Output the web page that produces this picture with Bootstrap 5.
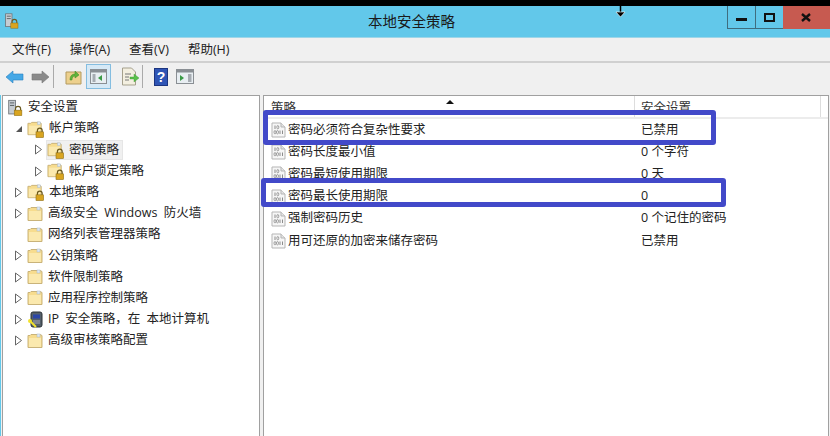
<!DOCTYPE html>
<html lang="zh"><head><meta charset="utf-8"><title>本地安全策略</title>
<link href="https://cdn.jsdelivr.net/npm/bootstrap@5.3.0/dist/css/bootstrap.min.css" rel="stylesheet">
<style>
html,body{height:436px;overflow:hidden;background:#fff}
body{font-family:"Open Sans","Noto Sans CJK SC",sans-serif;font-size:12.5px;color:#222;position:relative}
.topstrip{height:6px;background:#000}
.titlebar{height:32px;background:#62c8ea;border-bottom:1px solid #9fd6e8;position:relative}
.title-text{font-size:14.5px;color:#1a1a1a;padding-right:7px}
.title-ico{position:absolute;left:4px;top:6px}
.win-btns{position:absolute;right:0;top:0;height:23px}
.wb{width:29px;border:1px solid #3f6d7e;border-top:0;margin-left:-1px}
.wb-close{width:47px;background:#c75a50;border-left:0;border-color:#c75a50}
.menubar{height:25px;background:#f0f0f0;border-bottom:2px solid #d0d0d0;padding-left:12px;padding-top:2px;gap:19px}
.toolbar{height:32px;background:#f0f0f0;padding-left:6px;padding-bottom:5px}
.tb-sep{width:1px;height:23px;background:#aaa}
.tb-on{width:25px;height:25px;background:#d6e9f6;border:1px solid #84bde0;margin-left:4px}
.gap-fwd{margin-left:7px}.gap-sep1{margin-left:4px}.gap-up{margin-left:11px}.gap-doc{margin-left:10px}.gap-sep2{margin-left:2px}.gap-help{margin-left:11px}.gap-panel{margin-left:8px}
.panes{height:341px;background:#f0f0f0;gap:3px;padding-left:1px;border-left:1px solid #62c8ea}
.tree{width:258px;background:#fff;border:1px solid #a0a0a0;border-bottom:0;padding-top:1px;word-spacing:3px}
.tree-row{height:21.2px;white-space:nowrap}
.ind0{padding-left:4px}.ind1{padding-left:11px}.ind2{padding-left:31px}
.tw{width:9px;flex:none;margin-right:4px}
.tico{flex:none;margin-right:4px}
.fico{flex:none;margin-right:5px}
.sel-box{background:#f0f0f0;border:1px solid #e6e6e6;height:20px;padding-right:3px;margin-left:-1px}
.listpane{flex:1;background:#fff;border:1px solid #a0a0a0;border-bottom:0;margin-right:1px}
.lhead{height:23px;border-bottom:2px solid #ececec;color:#333;position:relative}
.lh1{width:371px;padding-left:7px;border-right:1px solid #ddd;padding-top:3px}
.lh2{width:186px;padding-left:6px;border-right:1px solid #ddd;padding-top:3px}
.sort{position:absolute;left:182px;top:4px;width:0;height:0;border-left:4px solid transparent;border-right:4px solid transparent;border-bottom:4px solid #111}
.lrow{height:22.2px;white-space:nowrap}
.lc1{width:370px;padding-left:7px}
.lc1 svg{margin-right:2px}
.lc2{padding-left:7px}
.mark-box{position:absolute;border:5px solid #4249c9;border-radius:3px;pointer-events:none}
.mb1{left:263px;top:110px;width:453px;height:35px}
.mb2{left:261px;top:178px;width:465px;height:29px}
.cursor{position:absolute;left:615px;top:5px}
.defs{width:0;height:0;position:absolute}
</style></head>
<body>
<svg class="defs">
<defs>
<symbol id="fold" viewBox="0 0 16 16"><path d="M1 2.500h2l1-1h9l2 1v12H1z" fill="#f7dc8e" stroke="#c9b37a"/><rect x="2" y="5" width="12" height="9" fill="#fbe9ae"/><rect x="10" y="1" width="3" height="3" fill="#dfe9f2" stroke="#a8b7c4" stroke-width=".5"/></symbol>
<symbol id="lock" viewBox="0 0 19 19"><path d="M1 3.500h3l1-1h8l2 1v12H1z" fill="#f7dc8e" stroke="#c9b37a"/><rect x="2" y="6" width="12" height="9" fill="#fbe9ae"/><rect x="11" y="2" width="3" height="3" fill="#dfe9f2" stroke="#a8b7c4" stroke-width=".5"/><path d="M11 13v-2a2.500 2.500 0 0 1 5 0v2" fill="none" stroke="#6b5a20" stroke-width="1.300"/><rect x="9.500" y="12.500" width="8" height="6" fill="#d9a520" stroke="#8a6a14" stroke-width=".6"/></symbol>
<symbol id="pol" viewBox="0 0 15 16"><path d="M1 1h9l4 4v10H1z" fill="#f6f6f6" stroke="#b5b5b5"/><path d="M10 1v4h4" fill="#e4e4e4" stroke="#b5b5b5"/><path d="M4 3.500v3.500M9 8.500v3.500" stroke="#8c8c8c"/><ellipse cx="6.800" cy="5.200" rx="1" ry="1.700" fill="none" stroke="#8c8c8c" stroke-width=".8"/><ellipse cx="4" cy="10.200" rx="1" ry="1.700" fill="none" stroke="#8c8c8c" stroke-width=".8"/><ellipse cx="6.500" cy="10.200" rx="1" ry="1.700" fill="none" stroke="#8c8c8c" stroke-width=".8"/><path d="M11.500 8.500v3.500" stroke="#8c8c8c"/></symbol>
<symbol id="srv" viewBox="0 0 20 20"><rect x="2" y="1" width="8" height="16" fill="#c6ccd2" stroke="#6d7378"/><path d="M3.500 4h5M3.500 7h5" stroke="#4a5054"/><path d="M10 13v-2a3 3 0 0 1 6 0v2" fill="none" stroke="#6b5a20" stroke-width="1.400"/><rect x="8.500" y="12.500" width="9" height="6.500" fill="#d9a520" stroke="#8a6a14" stroke-width=".6"/></symbol>
<symbol id="open" viewBox="0 0 9 9"><path d="M8 2v6H2z" fill="#555"/></symbol>
<symbol id="closed" viewBox="0 0 9 11"><path d="M1.500 1l6 4.500-6 4.500z" fill="#fff" stroke="#666"/></symbol>
</defs></svg>

<div class="topstrip"></div>
<div class="titlebar d-flex align-items-center justify-content-center">
  <svg class="title-ico" width="16" height="18"><use href="#srv"/></svg>
  <div class="title-text">本地安全策略</div>
  <div class="win-btns d-flex">
    <div class="wb d-flex align-items-center justify-content-center"><svg width="11" height="11"><rect x="0" y="6" width="11" height="3" fill="#111"/></svg></div>
    <div class="wb d-flex align-items-center justify-content-center"><svg width="11" height="9"><rect x="1" y="1" width="9" height="7" fill="none" stroke="#111" stroke-width="2"/></svg></div>
    <div class="wb wb-close d-flex align-items-center justify-content-center"><svg width="10" height="9"><path d="M1 1l8 7M9 1L1 8" stroke="#111" stroke-width="2.400"/></svg></div>
  </div>
</div>
<div class="menubar d-flex align-items-center"><span>文件(F)</span><span>操作(A)</span><span>查看(V)</span><span>帮助(H)</span></div>
<div class="toolbar d-flex align-items-center">
  <svg width="18" height="14"><path d="M0 7l7-6v3h10v6H7v3z" fill="#45a8e6" stroke="#2a7fc0" stroke-width=".6"/></svg>
  <svg class="gap-fwd" width="18" height="14"><path d="M18 7l-7-6v3H1v6h10v3z" fill="#8a8a8a" stroke="#777" stroke-width=".6"/></svg>
  <div class="tb-sep gap-sep1"></div>
  <svg class="gap-up" width="17" height="17" viewBox="0 0 17 17"><path d="M1 4h15v12H1z" fill="#edd08d" stroke="#b39a5f"/><path d="M5 12c0-4 2-6 5-6V3l4 4-4 3V8c-2 0-3 2-3 4z" fill="#5fb33a" stroke="#3c8a22" stroke-width=".5"/></svg>
  <div class="tb-on d-flex align-items-center justify-content-center"><svg width="17" height="15"><rect x=".5" y=".5" width="16" height="14" fill="#e8eef2" stroke="#8a8f94"/><rect x="1" y="1" width="15" height="2.500" fill="#8a8f94"/><rect x="2.500" y="5" width="3" height="8" fill="#a6acb2"/><path d="M12 6v6l-4-3z" fill="#3a9a46"/></svg></div>
  <svg class="gap-doc" width="19" height="19" viewBox="0 0 19 19"><path d="M1.500 1h9l4 4v13h-13z" fill="#f3efe0" stroke="#a5a08c"/><path d="M4 7h6M4 10h4M4 13h4" stroke="#777"/><path d="M9 10h4V7l5 4-5 4v-3H9z" fill="#59c04a" stroke="#3c9a30" stroke-width=".4"/></svg>
  <div class="tb-sep gap-sep2"></div>
  <svg class="gap-help" width="14" height="18"><rect x=".5" y=".5" width="13" height="17" fill="#2f55b5" stroke="#1c3580"/><text x="7" y="14" text-anchor="middle" font-family="Liberation Sans" font-weight="700" font-size="14" fill="#fff">?</text></svg>
  <svg class="gap-panel" width="18" height="15"><rect x=".5" y=".5" width="17" height="14" fill="#e8eef2" stroke="#8a8f94"/><rect x="1" y="1" width="16" height="2.500" fill="#8a8f94"/><rect x="12" y="5" width="3.500" height="8" fill="#a6acb2"/><path d="M4 6v6l4-3z" fill="#3a9a46"/></svg>
</div>
<div class="panes d-flex">
  <div class="tree">
    <div class="tree-row d-flex align-items-center ind0"><svg class="tico" width="17" height="18"><use href="#srv"/></svg><span>安全设置</span></div>
    <div class="tree-row d-flex align-items-center ind1"><svg class="tw" width="9" height="9"><use href="#open"/></svg><svg class="tico" width="18" height="18"><use href="#lock"/></svg><span>帐户策略</span></div>
    <div class="tree-row d-flex align-items-center ind2"><svg class="tw" width="9" height="11"><use href="#closed"/></svg><div class="sel-box d-flex align-items-center"><svg class="tico" width="18" height="18"><use href="#lock"/></svg><span>密码策略</span></div></div>
    <div class="tree-row d-flex align-items-center ind2"><svg class="tw" width="9" height="11"><use href="#closed"/></svg><svg class="tico" width="18" height="18"><use href="#lock"/></svg><span>帐户锁定策略</span></div>
    <div class="tree-row d-flex align-items-center ind1"><svg class="tw" width="9" height="11"><use href="#closed"/></svg><svg class="tico" width="18" height="18"><use href="#lock"/></svg><span>本地策略</span></div>
    <div class="tree-row d-flex align-items-center ind1"><svg class="tw" width="9" height="11"><use href="#closed"/></svg><svg class="fico" width="16" height="16"><use href="#fold"/></svg><span>高级安全 Windows 防火墙</span></div>
    <div class="tree-row d-flex align-items-center ind1"><span class="tw"></span><svg class="fico" width="16" height="16"><use href="#fold"/></svg><span>网络列表管理器策略</span></div>
    <div class="tree-row d-flex align-items-center ind1"><svg class="tw" width="9" height="11"><use href="#closed"/></svg><svg class="fico" width="16" height="16"><use href="#fold"/></svg><span>公钥策略</span></div>
    <div class="tree-row d-flex align-items-center ind1"><svg class="tw" width="9" height="11"><use href="#closed"/></svg><svg class="fico" width="16" height="16"><use href="#fold"/></svg><span>软件限制策略</span></div>
    <div class="tree-row d-flex align-items-center ind1"><svg class="tw" width="9" height="11"><use href="#closed"/></svg><svg class="fico" width="16" height="16"><use href="#fold"/></svg><span>应用程序控制策略</span></div>
    <div class="tree-row d-flex align-items-center ind1"><svg class="tw" width="9" height="11"><use href="#closed"/></svg><svg class="fico" width="16" height="17" viewBox="0 0 16 17"><rect x="4" y="1" width="11" height="15" rx="2" fill="#55606a" stroke="#2b3136"/><rect x="6" y="3.500" width="7" height="4" fill="#2b46a8"/><path d="M6 10h7M6 12h7" stroke="#aab"/><circle cx="3" cy="10" r="2" fill="#f2e22e"/><path d="M3 10l6 6" stroke="#f2e22e" stroke-width="2"/></svg><span>IP 安全策略，在 本地计算机</span></div>
    <div class="tree-row d-flex align-items-center ind1"><svg class="tw" width="9" height="11"><use href="#closed"/></svg><svg class="fico" width="16" height="16"><use href="#fold"/></svg><span>高级审核策略配置</span></div>
  </div>
  <div class="listpane">
    <div class="lhead d-flex"><div class="lh1">策略</div><div class="lh2">安全设置</div><i class="sort"></i></div>
    <div class="lrow d-flex align-items-center"><div class="lc1 d-flex align-items-center"><svg width="15" height="16"><use href="#pol"/></svg>密码必须符合复杂性要求</div><div class="lc2">已禁用</div></div>
    <div class="lrow d-flex align-items-center"><div class="lc1 d-flex align-items-center"><svg width="15" height="16"><use href="#pol"/></svg>密码长度最小值</div><div class="lc2">0 个字符</div></div>
    <div class="lrow d-flex align-items-center"><div class="lc1 d-flex align-items-center"><svg width="15" height="16"><use href="#pol"/></svg>密码最短使用期限</div><div class="lc2">0 天</div></div>
    <div class="lrow d-flex align-items-center"><div class="lc1 d-flex align-items-center"><svg width="15" height="16"><use href="#pol"/></svg>密码最长使用期限</div><div class="lc2">0</div></div>
    <div class="lrow d-flex align-items-center"><div class="lc1 d-flex align-items-center"><svg width="15" height="16"><use href="#pol"/></svg>强制密码历史</div><div class="lc2">0 个记住的密码</div></div>
    <div class="lrow d-flex align-items-center"><div class="lc1 d-flex align-items-center"><svg width="15" height="16"><use href="#pol"/></svg>用可还原的加密来储存密码</div><div class="lc2">已禁用</div></div>
  </div>
</div>
<div class="mark-box mb1"></div>
<div class="mark-box mb2"></div>
<svg class="cursor" width="11" height="13"><path d="M5.500 0v8" stroke="#000" stroke-width="1.500"/><path d="M1 7h9l-4.500 5z" fill="#000" stroke="#fff" stroke-width=".6"/></svg>
</body></html>
